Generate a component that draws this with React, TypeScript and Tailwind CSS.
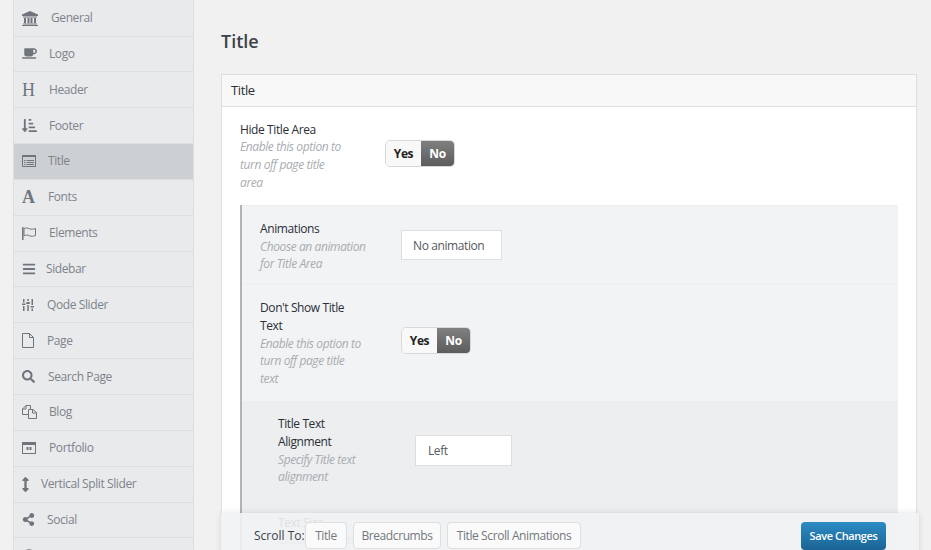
import {
  FaCoffee,
  FaSearch,
  FaShareAlt,
  FaBars,
  FaArrowsAltV,
  FaSortAmountDownAlt,
  FaQuestionCircle,
} from "react-icons/fa";
import type { ReactNode } from "react";

const font = "font-['Open_Sans',sans-serif]";

function BankIcon() {
  return (
    <svg viewBox="0 0 16 15" className="w-4 h-[15px]" fill="currentColor">
      <path d="M8 0 16 3.500V5H0V3.500z" />
      <path d="M1 5.500h14V6.500H1zM2 7h2v5H2zM5.500 7h2v5h-2zM8.500 7h2v5h-2zM12 7h2v5h-2zM1 12.500h14v1H1zM0 14h16v1H0z" />
    </svg>
  );
}

function ListIcon() {
  return (
    <svg viewBox="0 0 14 12" className="w-[14px] h-3" fill="none" stroke="currentColor">
      <path d="M0.500 1.500h13v10h-13z" />
      <path d="M0 1h14" strokeWidth="2" />
      <path d="M2 5.500h1.500M4.500 5.500h7.500M2 7.500h1.500M4.500 7.500h7.500M2 9.500h1.500M4.500 9.500h7.500" />
    </svg>
  );
}

function FlagIcon() {
  return (
    <svg viewBox="0 0 14 13" className="w-[14px] h-[13px]" fill="none" stroke="currentColor">
      <path d="M0.800 0v13" strokeWidth="1.500" />
      <path d="M2 1.500c2-1 3.500-.5 5.500.3 2 .7 3.500.5 6-.3v7c-2.500 1-4 1-6 .2-2-.8-3.500-.9-5.500.1z" />
    </svg>
  );
}

function SliderIcon() {
  return (
    <svg viewBox="0 0 12 12" className="w-3 h-3" fill="currentColor">
      <path d="M1 0h1.500v3.500H1zM0 4.500h3.500V6H0zM1 7h1.500v5H1zM5.300 0h1.500v2H5.300zM4.300 3h3.500v2H4.300zM5.300 6h1.500v6H5.300zM9.500 0h1.500v6H9.500zM8.500 7H12v1.500H8.500zM9.500 9.500h1.500V12H9.500z" />
    </svg>
  );
}

function FileIcon() {
  return (
    <svg viewBox="0 0 12 15" className="w-3 h-[15px]" fill="none" stroke="currentColor">
      <path d="M0.500 0.500h7l4 4v10h-11z" />
      <path d="M7.500 0.500v4h4" />
    </svg>
  );
}

function FilesIcon() {
  return (
    <svg viewBox="0 0 15 14" className="w-[15px] h-[14px]" fill="none" stroke="currentColor">
      <path d="M6 9.500H0.500V4L4 0.500h4.500V4" />
      <path d="M4 0.500V4H0.500" />
      <path d="M6.500 13.500V4.500H11l3.500 3v6z" />
      <path d="M10.500 4.500v3.500h4" />
    </svg>
  );
}

function PortfolioIcon() {
  return (
    <svg viewBox="0 0 14 12" className="w-[14px] h-3" fill="currentColor">
      <path d="M0 0h14v12H0zM1 3v8h12V3z" fillRule="evenodd" />
      <path d="M4.500 5h2v3h-2zM7.500 5h2v3h-2z" />
    </svg>
  );
}

const navItems: { id: string; label?: string; icon: ReactNode; labelClass: string; active?: boolean }[] = [
  { id: "general", label: "General", icon: <BankIcon />, labelClass: "ml-[13px]" },
  { id: "logo", label: "Logo", icon: <FaCoffee size={15} />, labelClass: "ml-[11px]" },
  {
    id: "header",
    label: "Header",
    icon: <span className="font-['Liberation_Serif',serif] text-[18px] leading-none">H</span>,
    labelClass: "ml-[11px]",
  },
  { id: "footer", label: "Footer", icon: <FaSortAmountDownAlt size={15} />, labelClass: "ml-[11px]" },
  { id: "title", label: "Title", icon: <ListIcon />, labelClass: "ml-[10px]", active: true },
  {
    id: "fonts",
    label: "Fonts",
    icon: <span className="font-['Liberation_Serif',serif] font-bold text-[18px] leading-none">A</span>,
    labelClass: "ml-[10px]",
  },
  { id: "elements", label: "Elements", icon: <FlagIcon />, labelClass: "ml-[11px]" },
  { id: "sidebar", label: "Sidebar", icon: <FaBars size={14} />, labelClass: "ml-[8px]" },
  { id: "qode", label: "Qode Slider", icon: <SliderIcon />, labelClass: "ml-[9px]" },
  { id: "page", label: "Page", icon: <FileIcon />, labelClass: "ml-[9px]" },
  { id: "search", label: "Search Page", icon: <FaSearch size={13} />, labelClass: "ml-[10px]" },
  { id: "blog", label: "Blog", icon: <FilesIcon />, labelClass: "ml-[11px]" },
  { id: "portfolio", label: "Portfolio", icon: <PortfolioIcon />, labelClass: "ml-[11px]" },
  {
    id: "vertical",
    label: "Vertical Split Slider",
    icon: <span className="-ml-[4px]"><FaArrowsAltV size={15} /></span>,
    labelClass: "ml-[3px]",
  },
  { id: "social", label: "Social", icon: <FaShareAlt size={13} />, labelClass: "ml-[9px]" },
  { id: "next", icon: <FaQuestionCircle size={14} />, labelClass: "ml-[9px]" },
];

function Toggle() {
  return (
    <div className="flex h-[27px] w-[70px] text-[12px] font-bold rounded-[5px] overflow-hidden border border-[#d6d8db]">
      <div className="w-[35px] flex items-center justify-center bg-[#f8f8f8] text-[#222]">Yes</div>
      <div className="flex-1 flex items-center justify-center text-white bg-gradient-to-b from-[#808080] to-[#5c5c5c]">No</div>
    </div>
  );
}

function Field({ name, desc, width }: { name: string; desc: string; width: string }) {
  return (
    <div className={`${width} shrink-0`}>
      <div className="pt-[1px] text-[12px] leading-[18px] font-medium text-[#2a2f35]">{name}</div>
      <div className="-mt-[0.6px] text-[12px] leading-[17.6px] italic text-[#a8acb0]">{desc}</div>
    </div>
  );
}

function ScrollLink({ label, width }: { label: string; width: string }) {
  return (
    <div className={`${width} h-[27px] flex items-center justify-center bg-[#fafafa] border border-[#dcdee0] rounded-[4px] text-[12px] text-[#73787d]`}>
      {label}
    </div>
  );
}

export default function App() {
  return (
    <div className={`${font} tracking-[-0.4px] relative w-[931px] h-[550px] overflow-hidden bg-[#f1f1f1] flex`}>
      <div className="ml-[13px] w-[181px] h-[550px] overflow-hidden shrink-0 border-x border-[#dcdee0] bg-[#e9eaec]">
        <div className="pt-[0.7px]">
          {navItems.map((item) => (
            <div
              key={item.id}
              className={`h-[35.85px] pl-2 flex items-center border-b border-[#dcdee0] text-[12px] text-[#7d838b] ${
                item.active ? "bg-[#cdd0d2]" : ""
              }`}
            >
              <span className="w-4 flex justify-start text-[#70757d]">{item.icon}</span>
              {item.label && <span className={item.labelClass}>{item.label}</span>}
            </div>
          ))}
        </div>
      </div>

      <div className="ml-[27px] w-[696px] shrink-0">
        <h1 className="mt-[29px] text-[18px] tracking-normal leading-[25px] font-semibold text-[#3c4248]">Title</h1>

        <div className="mt-[20px] border border-[#dcdee0] bg-white h-[500px]">
          <div className="h-[32px] flex items-center pl-[9px] text-[13px] text-[#2a2f35] bg-[#f8f8f8] border-b border-[#dcdee0]">
            Title
          </div>

          <div className="px-[18px] pt-[13px]">
            <div className="flex items-start">
              <Field
                name="Hide Title Area"
                desc="Enable this option to turn off page title area"
                width="w-[105px]"
              />
              <div className="ml-[40px] mt-[20px]">
                <Toggle />
              </div>
            </div>

            <div className="mt-[14px] border-l-[2px] border-[#b0b3b8]">
              <div className="h-[80px] bg-[#f2f3f5] pl-[18px] pt-[13px] border-b border-[#eceef0] border-t">
                <div className="flex items-start">
                  <Field name="Animations" desc="Choose an animation for Title Area" width="w-[110px]" />
                  <div className="ml-[31px] mt-[11px] w-[101px] h-[30px] pl-[11px] pt-[1px] flex items-center bg-white border border-[#dcdee0] text-[12px] text-[#555a60]">
                    No animation
                  </div>
                </div>
              </div>
              <div className="h-[116px] bg-[#f2f3f5] pl-[18px] pt-[13px]">
                <div className="flex items-start">
                  <Field
                    name="Don't Show Title Text"
                    desc="Enable this option to turn off page title text"
                    width="w-[105px]"
                  />
                  <div className="ml-[36px] mt-[29px]">
                    <Toggle />
                  </div>
                </div>
              </div>
              <div className="bg-[#eceef0] pl-[36px] pt-[13px] pb-[14px]">
                <div className="flex items-start">
                  <Field name="Title Text Alignment" desc="Specify Title text alignment" width="w-[100px]" />
                  <div className="ml-[37px] mt-[21px] w-[97px] h-[31px] pl-[12px] pt-[1px] flex items-center bg-white border border-[#dcdee0] text-[12px] text-[#555a60]">
                    Left
                  </div>
                </div>
                <div className="mt-[27px]">
                  <Field name="Text Size" desc="Choose a text size" width="w-[110px]" />
                </div>
              </div>
            </div>
          </div>
        </div>
      </div>

      <div className="absolute left-[221px] top-[513px] w-[698px] h-[50px] flex items-start pt-[9px] pl-[33px] pr-[33px] bg-[#f1f2f3]/90 shadow-[0_0_6px_rgba(0,0,0,0.12)]">
        <span className="text-[12px] tracking-normal leading-[27px] text-[#3c4248] w-[51px]">Scroll To:</span>
        <div className="flex gap-[6px]">
          <ScrollLink label="Title" width="w-[42px]" />
          <ScrollLink label="Breadcrumbs" width="w-[88px]" />
          <ScrollLink label="Title Scroll Animations" width="w-[134px]" />
        </div>
        <div className="ml-auto w-[85px] h-[28px] flex items-center justify-center rounded-[4px] text-white text-[11px] font-semibold bg-gradient-to-b from-[#2b8cc4] to-[#1b6494]">
          Save Changes
        </div>
      </div>
    </div>
  );
}
